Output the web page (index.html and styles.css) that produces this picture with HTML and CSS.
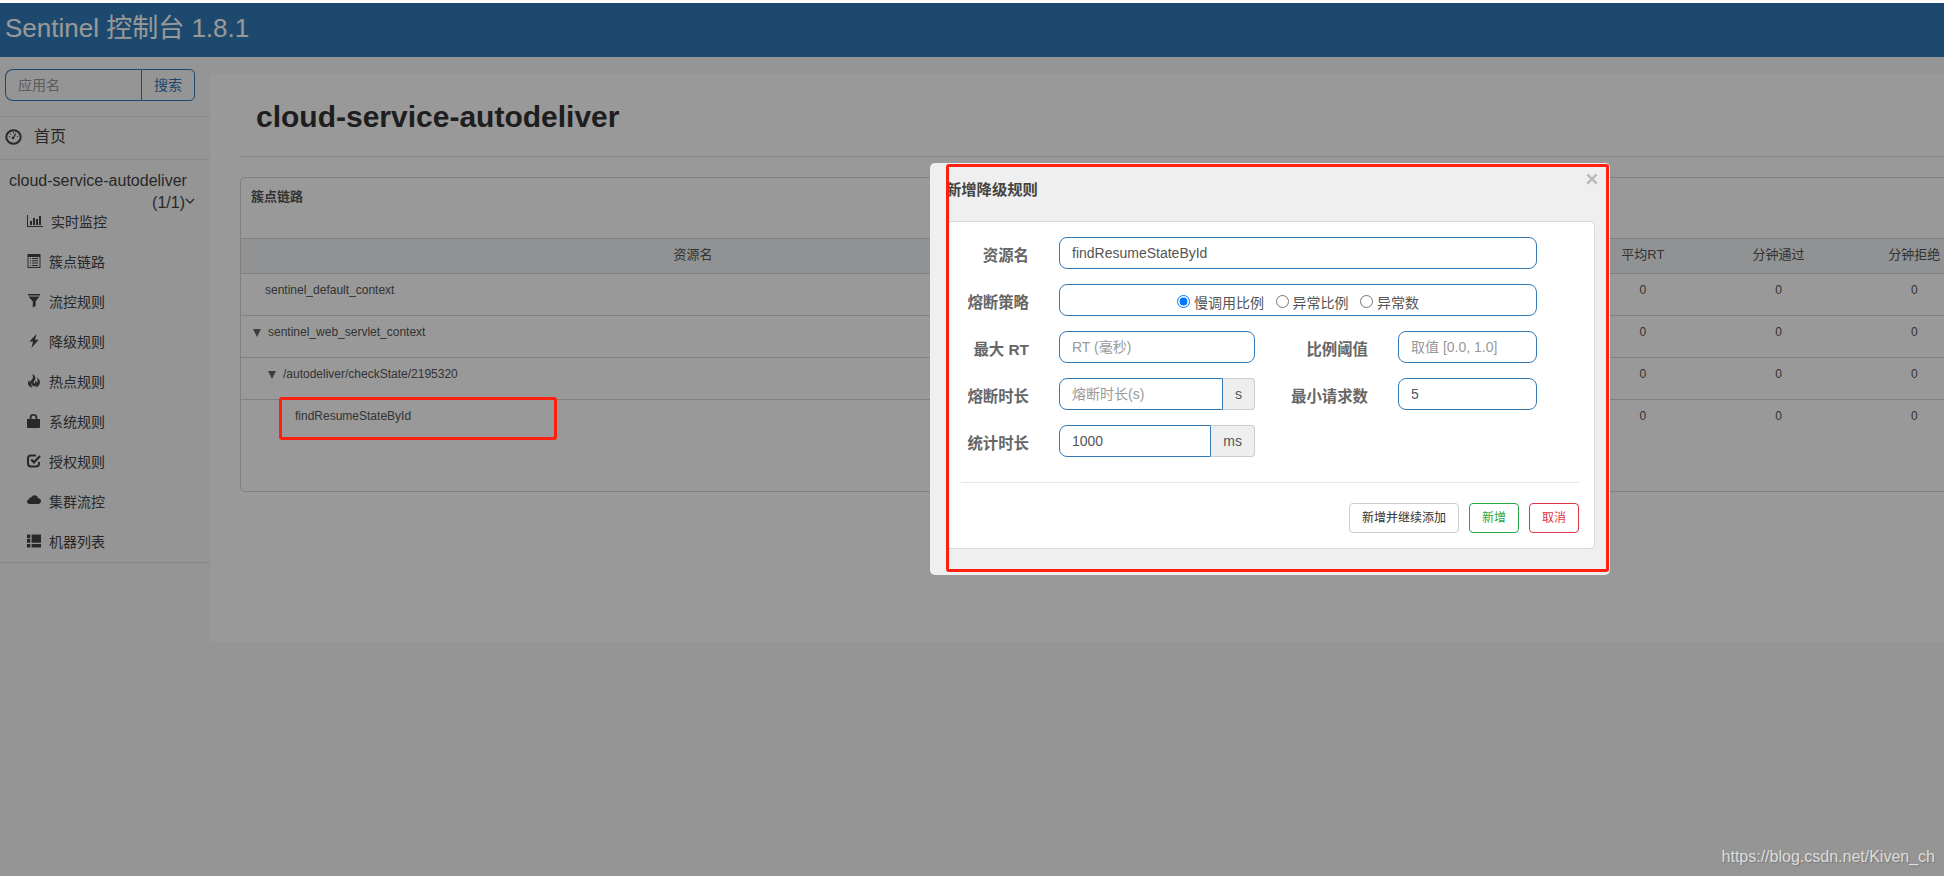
FILE: index.html
```html
<!DOCTYPE html>
<html lang="zh-CN">
<head>
<meta charset="utf-8">
<title>Sentinel 控制台</title>
<link rel="stylesheet" href="styles.css">
</head>
<body>
<header class="navbar">Sentinel 控制台 1.8.1</header>
<div class="layout">
  <aside class="sidebar">
    <div class="search"><input class="search-input" placeholder="应用名"><button class="search-btn">搜索</button></div>
    <a class="home">
      <svg width="17" height="16" viewBox="0 0 17 16"><ellipse cx="8.5" cy="8" rx="7.2" ry="6.700" fill="none" stroke="currentColor" stroke-width="2"/><path d="M8 9.5L10.6 4.6" stroke="currentColor" stroke-width="1.2"/><circle cx="8" cy="9" r="1.3" fill="currentColor"/><path d="M4 7.5h1M5 5h1M8 3.7h1M12 7.5h1" stroke="currentColor" stroke-width="1.2"/></svg>
      <span>首页</span>
    </a>
    <div class="app"><div>cloud-service-autodeliver</div><div class="app-count">(1/1)<svg width="10" height="8" viewBox="0 0 10 8"><path d="M1 2l4 4 4-4" fill="none" stroke="currentColor" stroke-width="1.3"/></svg></div></div>
    <nav class="menu">
      <a class="item"><svg width="16" height="14" viewBox="0 0 16 14" fill="currentColor"><path d="M0 1h1v11h15v1H0zM3 7h2v4H3zM6 4h2v7H6zM9 5h2v6H9zM12 2h2v9h-2z"/></svg>实时监控</a>
      <a class="item"><svg width="14" height="14" viewBox="0 0 14 14" fill="currentColor"><path fill-rule="evenodd" d="M.5 0h13v14H.5zM1.5 3v10h11V3z"/><path d="M3 4h1v1H3zM5 4h6v1H5zM3 6.3h1v1H3zM5 6.3h6v1H5zM3 8.6h1v1H3zM5 8.6h6v1H5zM3 10.9h1v1H3zM5 10.9h6v1H5z"/></svg>簇点链路</a>
      <a class="item"><svg width="14" height="14" viewBox="0 0 14 14" fill="currentColor"><path d="M1 0h12v1.5H1zM1.5 2.5h11L8.6 7.4V12L5.8 13.6V7.4z"/></svg>流控规则</a>
      <a class="item"><svg width="14" height="14" viewBox="0 0 14 14" fill="currentColor"><path d="M9.5 0L2.5 7.6h3.6L4.4 14l7.3-8.2H8z"/></svg>降级规则</a>
      <a class="item"><svg width="14" height="14" viewBox="0 0 14 14" fill="currentColor"><path d="M5.2 0C8.8 1.5 9 4.5 7.2 6.8 6.4 8 6.5 9 7.3 9.8 8.5 8.8 8.6 7 7.9 6 9.4 6.7 10 8 9.5 9.5 11 8 11.2 5.5 9.8 3.4c2 1 3.3 3 3.1 5.1-.2 2.6-2.1 4.8-4.8 5.3 1-.8 1.5-1.6 1.4-2.5-1 1-2.4 1.3-3.4.7C4.900 11.300 4.800 10 5.300 8.600 4.200 9.600 3.900 11.500 5.500 13.700 2.500 13 .8 11.200 1 9c.1-1.300.7-2.100 1.500-3-.2 1.100 0 1.900.5 2.400C3.400 6.400 6 5.400 6 3.300 6.100 2 5.800 1 5.200 0z"/></svg>热点规则</a>
      <a class="item"><svg width="14" height="14" viewBox="0 0 14 14" fill="currentColor"><path fill-rule="evenodd" d="M0 5h2.700V3.200C2.700 1 4.200 0 6.500 0s3.800 1 3.800 3.200V5H13v7.500c0 1-.5 1.500-1.500 1.500h-10C.5 14 0 13.500 0 12.500zM4.500 5h4V3.300c0-1-.6-1.600-2-1.600s-2 .6-2 1.600z"/></svg>系统规则</a>
      <a class="item"><svg width="14" height="14" viewBox="0 0 14 14" fill="none" stroke="currentColor"><path d="M9 1.500H4C2 1.500 1 2.500 1 4v5.500C1 11.500 2 12.500 4 12.500h5c2 0 3-1 3-3V8" stroke-width="2"/><path d="M4.200 5.500L7 8.300 13 2" stroke-width="2.300"/></svg>授权规则</a>
      <a class="item"><svg width="14" height="14" viewBox="0 0 14.400 14" fill="currentColor"><path d="M3 10C1 10 0 8.900 0 7.500 0 6.200 1 5.200 2.200 5.200 2.200 3.500 3.300 2.800 4.500 3.100 5.200 1.700 6.300 1 7.700 1c2.100 0 3.600 1.400 3.900 3.300C13.200 4.200 14.400 5.500 14.400 7c0 1.700-1.200 3-2.900 3z"/></svg>集群流控</a>
      <a class="item"><svg width="14" height="14" viewBox="0 0 14 14" fill="currentColor"><path d="M0 .5h3.300v3.800H0zM0 5h3.300v3.800H0zM4.600.5H14v8.300H4.600zM0 10h3.300v3.500H0zM4.600 10H14v3.500H4.600z"/></svg>机器列表</a>
    </nav>
  </aside>
  <main class="content">
    <h1 class="app-title">cloud-service-autodeliver</h1>
    <section class="panel">
      <div class="panel-head">簇点链路</div>
      <div class="row thead"><div>资源名</div><div></div><div>平均RT</div><div>分钟通过</div><div>分钟拒绝</div></div>
      <div class="row"><div class="name lv0">sentinel_default_context</div><div></div><div>0</div><div>0</div><div>0</div></div>
      <div class="row"><div class="name lv1"><i class="caret"></i>sentinel_web_servlet_context</div><div></div><div>0</div><div>0</div><div>0</div></div>
      <div class="row"><div class="name lv2"><i class="caret"></i>/autodeliver/checkState/2195320</div><div></div><div>0</div><div>0</div><div>0</div></div>
      <div class="row"><div class="name lv3">findResumeStateById</div><div></div><div>0</div><div>0</div><div>0</div></div>
    </section>
  </main>
</div>
<div class="overlay"></div>
<div class="mark mark-row"></div>
<div class="modal">
  <div class="modal-head"><span>新增降级规则</span><svg class="close" width="12" height="12" viewBox="0 0 12 12"><path d="M1.300 1.300l9.400 9.400M10.700 1.300L1.300 10.700" stroke="currentColor" stroke-width="2.600"/></svg></div>
  <form class="card">
    <div class="fields">
      <label class="label">资源名</label><input class="field wide" value="findResumeStateById">
      <label class="label">熔断策略</label>
      <div class="field wide radios">
        <label class="radio"><input type="radio" name="grade" checked>慢调用比例</label>
        <label class="radio"><input type="radio" name="grade">异常比例</label>
        <label class="radio"><input type="radio" name="grade">异常数</label>
      </div>
      <label class="label">最大 RT</label><input class="field" placeholder="RT (毫秒)">
      <label class="label">比例阈值</label><input class="field" placeholder="取值 [0.0, 1.0]">
      <label class="label">熔断时长</label><div class="group"><input class="field" placeholder="熔断时长(s)"><span class="addon">s</span></div>
      <label class="label">最小请求数</label><input class="field" value="5">
      <label class="label">统计时长</label><div class="group"><input class="field" value="1000"><span class="addon">ms</span></div>
    </div>
    <div class="actions"><button type="button" class="btn">新增并继续添加</button><button type="button" class="btn green">新增</button><button type="button" class="btn red">取消</button></div>
  </form>
</div>
<div class="mark mark-modal"></div>
<div class="watermark">https://blog.csdn.net/Kiven_ch</div>
</body>
</html>
```

FILE: styles.css
```css
* { box-sizing: border-box; }
body {
  margin: 0; width: 1944px; height: 876px; overflow: hidden;
  background: #f8f8f8; color: #333;
  font: 14px/20px "Liberation Sans", "Noto Sans CJK SC", sans-serif;
}
input, button { font: inherit; margin: 0; outline: none; }
svg { flex: none; display: block; }

.navbar {
  height: 57px; padding: 0 5px; border-top: 3px solid #fff;
  background: #337ab7; color: #fff; font-size: 26px; line-height: 50px;
}
.layout { display: flex; height: 819px; }

.sidebar { width: 210px; flex: none; color: #444; }
.search { display: flex; height: 60px; padding: 12px 15px 16px 5px; border-bottom: 1px solid #e7e7e7; }
.search-input {
  width: 136px; height: 32px; padding: 0 12px; background: #fff0;
  border: 1px solid #337ab7; border-right: 0; border-radius: 8px 0 0 8px;
}
.search-btn {
  width: 54px; height: 32px; padding: 0; background: none; color: #337ab7;
  border: 1px solid #337ab7; border-radius: 0 5px 5px 0;
}
input::placeholder { color: #999; opacity: 1; }
.home {
  display: flex; align-items: center; gap: 12px; height: 43px; padding: 0 0 2px 5px;
  border-bottom: 1px solid #e7e7e7; font-size: 16px;
}
.app { padding: 10px 15px 0 9px; height: 53px; font-size: 16px; line-height: 22px; }
.app-count { display: flex; justify-content: flex-end; align-items: center; }
.app-count svg { margin-bottom: 4px; }
.menu { height: 361px; margin-top: -11px; border-bottom: 1px solid #e0e0e0; }
.item { display: flex; align-items: center; gap: 8px; height: 40px; padding-left: 27px; }
.item svg { margin-top: -2px; }

.content { width: 1734px; height: 568px; margin-top: 17px; padding-left: 30px; background: #fff; overflow: hidden; }
.app-title {
  height: 83px; margin: 0; padding-left: 16px; border-bottom: 1px solid #e0e0e0;
  font-size: 30px; line-height: 86px;
}
.panel { width: 1760px; height: 315px; margin-top: 20px; border: 1px solid #d6d6d6; border-radius: 5px; }
.panel-head { height: 60px; padding: 9px 10px; font-size: 13px; font-weight: bold; color: #555; }
.row {
  display: grid; grid-template-columns: 904px 430px repeat(3, 135.700px);
  height: 42px; padding-top: 6px; border-top: 1px solid #d6d6d6;
  font-size: 12px; text-align: center; color: #555;
}
.thead { height: 35px; background: #f2f4f6; font-size: 13px; }
.name { display: flex; align-items: center; text-align: left; height: 20px; }
.lv0 { padding-left: 24px; }
.lv1 { padding-left: 12px; }
.lv2 { padding-left: 27px; }
.lv3 { padding-left: 54px; }
.caret { margin: 1px 7px 0 0; border: solid transparent; border-width: 8px 4.500px 0; border-top-color: #666; }

.overlay { position: absolute; inset: 3px 0 0; background: rgba(0, 0, 0, .4); }
.mark { position: absolute; border: 3px solid #ff2010; border-radius: 3px; pointer-events: none; }
.mark-row { left: 279px; top: 397px; width: 278px; height: 43px; }
.mark-modal { left: 946px; top: 164px; width: 663px; height: 408px; }

.modal {
  position: absolute; left: 930px; top: 163px; width: 680px; height: 412px;
  padding: 0 15px 0 16px; background: #efefef; border-radius: 5px;
}
.modal-head {
  display: flex; justify-content: space-between; height: 58px; padding-top: 17px;
  font-size: 15.300px; font-weight: bold; color: #444;
}
.close { margin: -7px -3px 0 0; color: #bbb; }
.card { width: 649px; height: 328px; padding: 15px 15px 0 14px; background: #fff; border: 1px solid #d9d9d9; border-radius: 5px; }
.fields {
  display: grid; grid-template-columns: 98px 196px 143px 139px;
  grid-auto-rows: 32px; row-gap: 15px; height: 246px; border-bottom: 1px solid #e5e5e5;
}
.label { padding: 9px 30px 0 0; font-size: 15.400px; font-weight: bold; text-align: right; color: #666; white-space: nowrap; }
.field {
  min-width: 0; width: 100%; height: 32px; padding: 0 12px 1px; background: #fff;
  border: 1px solid #337ab7; border-radius: 8px; color: #555;
}
.wide { grid-column: 2 / -1; }
.radios { display: flex; justify-content: center; align-items: center; gap: 11.500px; padding: 5px 0 0; }
.radio { display: flex; align-items: center; gap: 4px; }
.radio input { width: 13px; height: 13px; margin-top: -3px; }
.group { display: flex; }
.group .field { flex: 1; border-radius: 8px 0 0 8px; }
.addon {
  padding: 5px 12px; background: #eee; color: #555;
  border: 1px solid #ccc; border-left: 0; border-radius: 0 4px 4px 0;
}
.actions { display: flex; justify-content: flex-end; gap: 10px; padding-top: 20px; }
.btn {
  height: 30px; padding: 0 12px 1px; background: #fff; color: #333;
  border: 1px solid #ccc; border-radius: 4px; font-size: 12px;
}
.green { color: #28a745; border-color: #28a745; }
.red { color: #dc3545; border-color: #dc3545; }
.watermark {
  position: absolute; right: 9px; bottom: 9px; font-size: 16px; color: #ddd;
  text-shadow: 1px 1px 1px #777;
}
```
